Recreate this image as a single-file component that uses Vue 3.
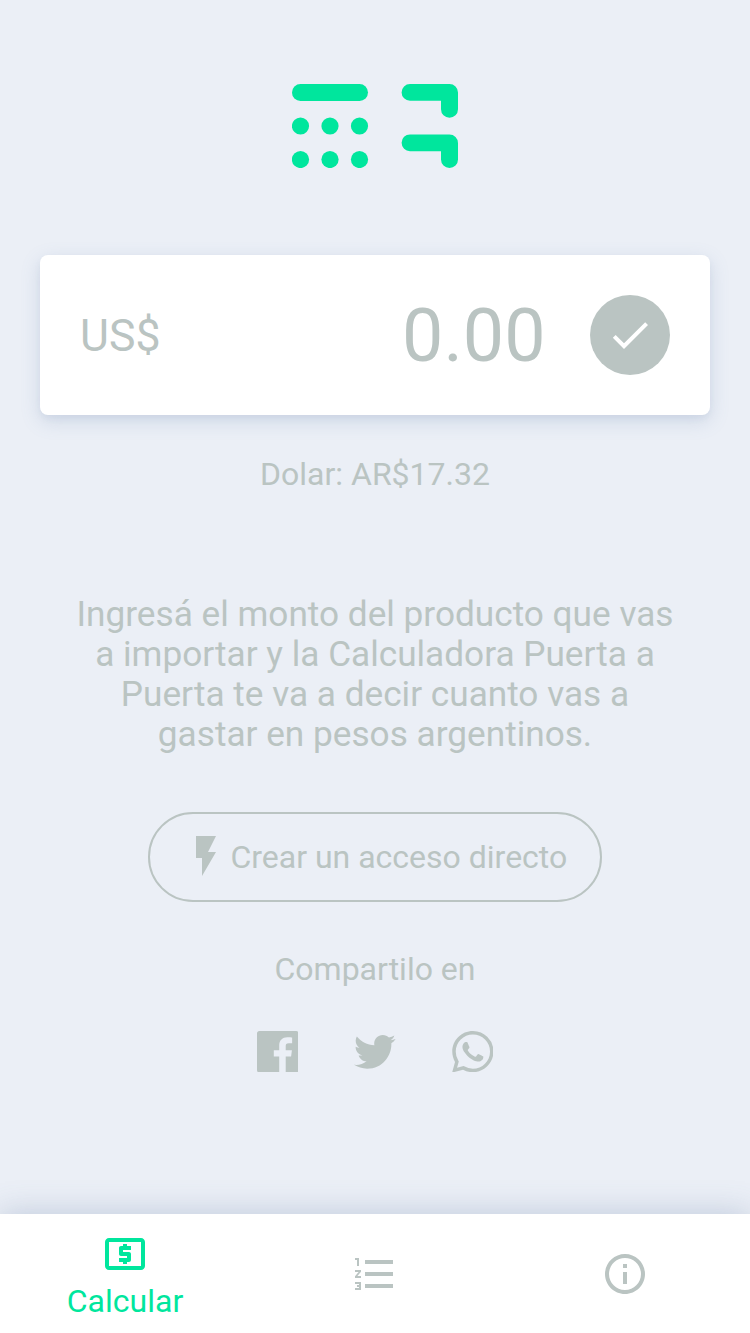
<script setup>
const keys = [
  [8.5, 42], [38, 42], [67.5, 42],
  [8.5, 75.5], [38, 75.5], [67.5, 75.5],
]
const shareIcons = [
  {
    name: 'Facebook',
    path: 'M22.676 0H1.324C.593 0 0 .593 0 1.324v21.352C0 23.408.593 24 1.324 24h11.494v-9.294H9.689v-3.621h3.129V8.41c0-3.099 1.894-4.785 4.659-4.785 1.325 0 2.464.097 2.796.141v3.24h-1.921c-1.5 0-1.792.721-1.792 1.771v2.311h3.584l-.465 3.63H16.56V24h6.115c.733 0 1.325-.592 1.325-1.324V1.324C24 .593 23.408 0 22.676 0',
  },
  {
    name: 'Twitter',
    path: 'M23.954 4.569c-.885.389-1.83.654-2.825.775 1.014-.611 1.794-1.574 2.163-2.723-.951.555-2.005.959-3.127 1.184-.896-.959-2.173-1.559-3.591-1.559-2.717 0-4.92 2.203-4.92 4.917 0 .39.045.765.127 1.124C7.691 8.094 4.066 6.13 1.64 3.161c-.427.722-.666 1.561-.666 2.475 0 1.71.87 3.213 2.188 4.096-.807-.026-1.566-.248-2.228-.616v.061c0 2.385 1.693 4.374 3.946 4.827-.413.111-.849.171-1.296.171-.314 0-.615-.03-.916-.086.631 1.953 2.445 3.377 4.604 3.417-1.68 1.319-3.809 2.105-6.102 2.105-.39 0-.779-.023-1.17-.067 2.189 1.394 4.768 2.209 7.557 2.209 9.054 0 13.999-7.496 13.999-13.986 0-.209 0-.42-.015-.63.961-.689 1.8-1.56 2.46-2.548l-.047-.02z',
  },
  {
    name: 'WhatsApp',
    path: 'M17.472 14.382c-.297-.149-1.758-.867-2.03-.967-.273-.099-.471-.148-.67.15-.197.297-.767.966-.94 1.164-.173.199-.347.223-.644.075-.297-.15-1.255-.463-2.39-1.475-.883-.788-1.48-1.761-1.653-2.059-.173-.297-.018-.458.13-.606.134-.133.298-.347.446-.52.149-.174.198-.298.298-.497.099-.198.05-.371-.025-.52-.075-.149-.669-1.612-.916-2.207-.242-.579-.487-.5-.669-.51-.173-.008-.371-.01-.57-.01-.198 0-.52.074-.792.372-.272.297-1.04 1.016-1.04 2.479 0 1.462 1.065 2.875 1.213 3.074.149.198 2.096 3.2 5.077 4.487.709.306 1.262.489 1.694.625.712.227 1.36.195 1.871.118.571-.085 1.758-.719 2.006-1.413.248-.694.248-1.289.173-1.413-.074-.124-.272-.198-.57-.347m-5.421 7.403h-.004a9.87 9.87 0 01-5.031-1.378l-.361-.214-3.741.982.998-3.648-.235-.374a9.86 9.86 0 01-1.51-5.26c.001-5.45 4.436-9.884 9.888-9.884 2.64 0 5.122 1.03 6.988 2.898a9.825 9.825 0 012.893 6.994c-.003 5.45-4.437 9.884-9.885 9.884m8.413-18.297A11.815 11.815 0 0012.05 0C5.495 0 .16 5.335.157 11.892c0 2.096.547 4.142 1.588 5.945L.057 24l6.305-1.654a11.882 11.882 0 005.683 1.448h.005c6.554 0 11.89-5.335 11.893-11.893a11.821 11.821 0 00-3.48-8.413z',
  },
]
</script>

<template>
  <div class="app">
    <main class="content">
      <svg class="logo" viewBox="0 0 166 84">
        <rect width="76" height="17" rx="8.5" />
        <circle v-for="([x, y], i) in keys" :key="i" :cx="x" :cy="y" r="8.6" />
        <path d="M118 0h39.500a8.500 8.500 0 0 1 8.500 8.500v16.800a8.500 8.500 0 0 1-17 0V16.800h-31a8.400 8.400 0 0 1 0-16.800z" />
        <path d="M118 50.400h39.500a8.500 8.500 0 0 1 8.500 8.500v16.600a8.500 8.500 0 0 1-17 0v-8.300h-31a8.400 8.400 0 0 1 0-16.800z" />
      </svg>

      <section class="card">
        <span class="currency">US$</span>
        <span class="amount">0.00</span>
        <button class="confirm">
          <svg class="icon" viewBox="0 0 24 24"><path d="M9 16.170L4.830 12l-1.420 1.410L9 19 21 7l-1.410-1.410z" /></svg>
        </button>
      </section>

      <p class="rate">Dolar: AR$17.32</p>

      <p class="intro">
        Ingresá el monto del producto que vas<br />a importar y la Calculadora Puerta a<br />Puerta te va a decir cuanto vas a<br />gastar en pesos argentinos.
      </p>

      <button class="shortcut">
        <svg class="icon" viewBox="0 0 24 24"><path d="M7 2v11h3v9l7-12h-4l4-8z" /></svg>
        <span>Crear un acceso directo</span>
      </button>

      <p class="share-title">Compartilo en</p>
      <div class="share">
        <svg v-for="s in shareIcons" :key="s.name" class="share-icon" viewBox="0 0 24 24"><path :d="s.path" /></svg>
      </div>
    </main>

    <nav class="tabs">
      <a class="tab active">
        <svg class="icon" viewBox="0 0 24 24"><path d="M11 17h2v-1h1c.55 0 1-.45 1-1v-3c0-.55-.45-1-1-1h-3v-1h4V8h-2V7h-2v1h-1c-.55 0-1 .45-1 1v3c0 .55.45 1 1 1h3v1H9v2h2v1zm9-13H4c-1.110 0-1.990.89-1.990 2L2 18c0 1.110.89 2 2 2h16c1.110 0 2-.89 2-2V6c0-1.110-.89-2-2-2zm0 14H4V6h16v12z" /></svg>
        <span>Calcular</span>
      </a>
      <a class="tab">
        <svg class="icon" viewBox="0 0 24 24"><path d="M2 17h2v.5H3v1h1v.5H2v1h3v-4H2v1zm1-9h1V4H2v1h1v3zm-1 3h1.800L2 13.100v.9h3v-1H3.200L5 10.900V10H2v1zm5-6v2h14V5H7zm0 14h14v-2H7v2zm0-6h14v-2H7v2z" /></svg>
      </a>
      <a class="tab">
        <svg class="icon" viewBox="0 0 24 24"><path d="M11 17h2v-6h-2v6zm1-15C6.480 2 2 6.480 2 12s4.480 10 10 10 10-4.480 10-10S17.520 2 12 2zm0 18c-4.410 0-8-3.590-8-8s3.590-8 8-8 8 3.590 8 8-3.590 8-8 8zM11 9h2V7h-2v2z" /></svg>
      </a>
    </nav>
  </div>
</template>

<style scoped>
.app {
  display: flex;
  flex-direction: column;
  height: 1333px;
  overflow: hidden;
  background: #ebeff6;
  color: #bac4c2;
  font-family: Roboto, "Liberation Sans", sans-serif;
  font-size: 32px;
}
.content {
  flex: 1;
  display: flex;
  flex-direction: column;
  align-items: center;
  padding: 84px 40px 0;
}
svg {
  display: block;
  flex: none;
  fill: currentColor;
}
p {
  margin: 0;
  text-align: center;
}
button {
  font: inherit;
  color: inherit;
  background: none;
  border: 0;
  padding: 0;
}
.icon {
  width: 48px;
  height: 48px;
}
.logo {
  width: 166px;
  height: 84px;
  color: #00e69d;
}
.card {
  display: flex;
  align-items: center;
  box-sizing: border-box;
  width: 670px;
  height: 160px;
  margin-top: 86.800px;
  padding: 0 40px;
  border-radius: 8px;
  background: #fff;
  box-shadow: 0 6px 20px rgba(94, 125, 174, 0.2), 0 4px 6px rgba(94, 125, 154, 0.07);
}
.currency {
  padding-top: 2px;
  font-size: 44.600px;
}
.amount {
  margin-left: auto;
  margin-right: 44.400px;
  padding-top: 2px;
  font-size: 73.600px;
}
.confirm {
  display: grid;
  place-items: center;
  width: 80px;
  height: 80px;
  border-radius: 50%;
  background: #bac4c2;
  color: #fff;
}
.rate {
  margin-top: 39px;
  line-height: 40px;
}
.intro {
  margin-top: 100px;
  font-size: 35.200px;
  line-height: 40px;
  white-space: nowrap;
}
.shortcut {
  display: flex;
  align-items: center;
  box-sizing: border-box;
  width: 454px;
  height: 90px;
  margin-top: 58px;
  padding: 0 32.400px;
  border: 2px solid #bac4c2;
  border-radius: 45px;
  white-space: nowrap;
}
.shortcut .icon {
  margin-bottom: 2px;
}
.share-title {
  margin-top: 47px;
  line-height: 40px;
}
.share {
  display: flex;
  gap: 55.800px;
  margin-top: 41.800px;
}
.share-icon {
  width: 41.600px;
  height: 41.600px;
}
.tabs {
  display: flex;
  height: 119px;
  background: #fff;
  box-shadow: 0 0 30px rgba(84, 110, 155, 0.3);
}
.tab {
  flex: 1;
  display: flex;
  flex-direction: column;
  align-items: center;
  padding-top: 36px;
}
.tab.active {
  padding-top: 16px;
  color: #00e69d;
  line-height: 46px;
}
</style>

<style>
body {
  margin: 0;
}
</style>
